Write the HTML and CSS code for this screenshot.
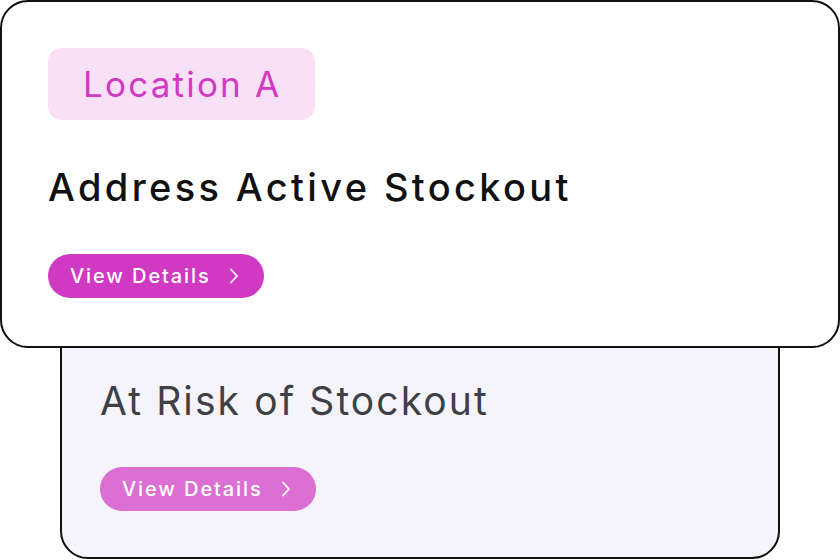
FILE: index.html
```html
<!DOCTYPE html>
<html lang="en">
<head>
  <meta charset="UTF-8" />
  <title>Stockout Tasks</title>
  <link rel="stylesheet" href="styles.css">
</head>
<body>
  <div class="stack">
    <div class="card front">
      <span class="badge">Location A</span>
      <h2 class="title">Address Active Stockout</h2>
      <a class="btn" href="#">View Details
        <svg width="10" height="16" viewBox="0 0 10 16"><path d="M2 1.5 L8 8 L2 14.5" fill="none" stroke="#fff" stroke-width="1.8" stroke-linecap="round" stroke-linejoin="round"/></svg>
      </a>
    </div>

    <div class="card back">
      <h2 class="title">At Risk of Stockout</h2>
      <a class="btn light" href="#">View Details
        <svg width="10" height="16" viewBox="0 0 10 16"><path d="M2 1.5 L8 8 L2 14.5" fill="none" stroke="#fff" stroke-width="1.8" stroke-linecap="round" stroke-linejoin="round"/></svg>
      </a>
    </div>
  </div>
</body>
</html>
```

FILE: styles.css
```css
body {
  margin: 0;
  padding: 0;
  background: #fff;
  font-family: Inter, 'Noto Sans', sans-serif;
}

.stack {
  width: 840px;
  height: 560px;
  display: flex;
  flex-direction: column;
}

.card {
  box-sizing: border-box;
  border: 2px solid #111;
  border-radius: 28px;
  display: flex;
  flex-direction: column;
  align-items: flex-start;
}

.front {
  position: relative;
  z-index: 2;
  width: 840px;
  height: 348px;
  background: #fff;
  padding: 46px 0 0 46px;
}

.back {
  position: relative;
  z-index: 1;
  width: 720px;
  height: 273px;
  margin: -62px 0 0 60px;
  padding: 90px 0 0 38px;
  background-color: #f5f4fa;
  background-image: radial-gradient(#e8e6f0 0.7px, transparent 0.8px);
  background-size: 9px 9px;
}

.badge {
  display: inline-flex;
  align-items: center;
  height: 72px;
  padding: 0 34px 0 35px;
  border-radius: 14px;
  background-color: #f8e0f6;
  background-image: radial-gradient(#f2d2ee 0.7px, transparent 0.8px);
  background-size: 9px 9px;
  color: #d03ac2;
  font-size: 35px;
  letter-spacing: 2.2px;
}

.title {
  margin: 0;
  font-size: 38px;
  font-weight: 500;
  line-height: 46px;
  letter-spacing: 3.35px;
  color: #111;
}

.front .title {
  margin-top: 44px;
}

.back .title {
  font-size: 39px;
  font-weight: 400;
  letter-spacing: 2.1px;
  color: #3f3f46;
}

.btn {
  display: inline-flex;
  align-items: center;
  gap: 18px;
  height: 44px;
  padding: 0 25px 0 22px;
  border-radius: 22px;
  background: #d03ac2;
  color: #fff;
  font-size: 20px;
  font-weight: 500;
  letter-spacing: 1.9px;
  text-decoration: none;
  margin-top: 44px;
}

.btn.light {
  background: #dc6fd3;
  margin-top: 43px;
}
```
